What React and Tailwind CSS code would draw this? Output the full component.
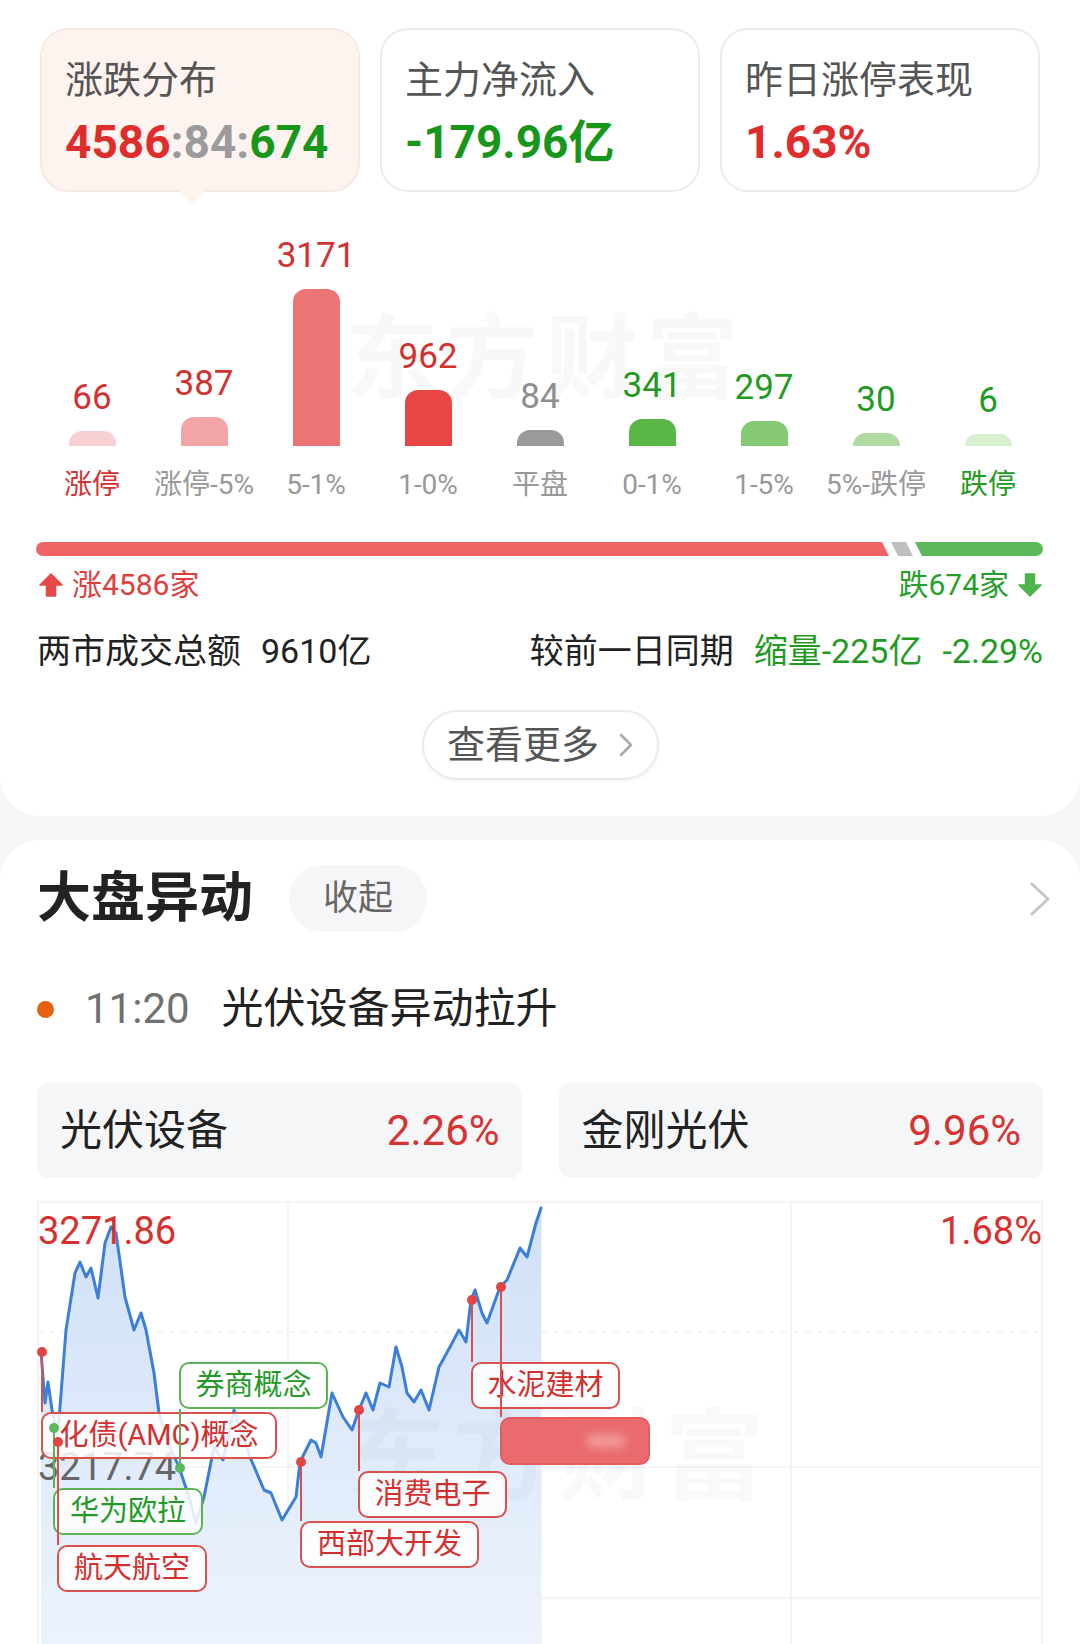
import clsx from 'clsx'

const FONT = "font-['Roboto','Noto_Sans_CJK_SC',sans-serif]"

// ── data ──────────────────────────────────────────────────────
const BARS = [
  { n: 66, h: 15, label: '涨停', bar: 'bg-[#f8cfd2]', num: 'text-[#d3312f]', lab: 'text-[#d3312f]' },
  { n: 387, h: 29, label: '涨停-5%', bar: 'bg-[#f2a4a6]', num: 'text-[#d3312f]', lab: 'text-[#999]' },
  { n: 3171, h: 157, label: '5-1%', bar: 'bg-[#ed7475]', num: 'text-[#d3312f]', lab: 'text-[#999]' },
  { n: 962, h: 56, label: '1-0%', bar: 'bg-[#e84545]', num: 'text-[#d3312f]', lab: 'text-[#999]' },
  { n: 84, h: 16, label: '平盘', bar: 'bg-[#9a9a9a]', num: 'text-[#8e8e8e]', lab: 'text-[#999]' },
  { n: 341, h: 27, label: '0-1%', bar: 'bg-[#5ab646]', num: 'text-[#1f9a22]', lab: 'text-[#999]' },
  { n: 297, h: 25, label: '1-5%', bar: 'bg-[#86c974]', num: 'text-[#1f9a22]', lab: 'text-[#999]' },
  { n: 30, h: 13, label: '5%-跌停', bar: 'bg-[#afdba2]', num: 'text-[#1f9a22]', lab: 'text-[#999]' },
  { n: 6, h: 12, label: '跌停', bar: 'bg-[#d6efcf]', num: 'text-[#1f9a22]', lab: 'text-[#1f9a22]' },
]

const LINE = [
  [4, 152], [8, 203], [11, 182], [15, 210], [20, 233], [22, 220], [29, 130], [38, 73], [43, 62],
  [49, 77], [54, 68], [61, 98], [68, 43], [74, 27], [79, 33], [88, 97], [97, 130], [104, 113],
  [109, 130], [117, 173], [122, 213], [131, 243], [142, 267], [152, 297], [159, 323], [167, 297],
  [177, 247], [186, 260], [197, 210], [213, 257], [227, 290], [234, 293], [245, 320], [259, 297],
  [263, 262], [274, 240], [279, 243], [284, 257], [295, 193], [306, 217], [315, 230], [322, 210],
  [329, 193], [336, 210], [343, 183], [352, 187], [359, 147], [365, 167], [370, 193], [377, 202],
  [384, 190], [392, 210], [402, 167], [413, 147], [422, 130], [429, 142], [434, 100], [438, 90],
  [445, 113], [450, 123], [463, 87], [470, 80], [483, 48], [490, 57], [499, 23], [504, 8],
]

// connector: x, from (dot y), to (box edge y), colour
const MARKS = [
  { x: 5, y: 152, to: 212, c: 'red' },
  { x: 17, y: 228, to: 288, c: 'green' },
  { x: 21, y: 242, to: 345, c: 'red' },
  { x: 143, y: 268, to: 209, c: 'green' },
  { x: 264, y: 262, to: 321, c: 'red' },
  { x: 322, y: 210, to: 271, c: 'red' },
  { x: 435, y: 100, to: 162, c: 'red' },
  { x: 464, y: 87, to: 217, c: 'red' },
]

const TAGS = [
  { text: '化债(AMC)概念', left: 4, top: 212, w: 236, c: 'red' },
  { text: '券商概念', left: 142, top: 162, w: 149, c: 'green' },
  { text: '华为欧拉', left: 16, top: 288, w: 150, c: 'green' },
  { text: '航天航空', left: 20, top: 345, w: 150, c: 'red' },
  { text: '西部大开发', left: 263, top: 321, w: 179, c: 'red' },
  { text: '消费电子', left: 321, top: 271, w: 149, c: 'red' },
  { text: '水泥建材', left: 434, top: 162, w: 149, c: 'red' },
]

const linePath = LINE.map(([x, y], i) => `${i ? 'L' : 'M'}${x} ${y}`).join(' ')
const fillPath = `M4 444 ${LINE.map(([x, y]) => `L${x} ${y}`).join(' ')} L504 444 Z`

// ── small drawings ────────────────────────────────────────────
function Arrow({ className }) {
  return (
    <svg width="26" height="26" viewBox="0 0 26 26" className={className}>
      <path d="M13 2 L24 13 H17.5 V24 H8.5 V13 H2 Z" fill="currentColor" stroke="currentColor" strokeWidth="1.5" strokeLinejoin="round" />
    </svg>
  )
}

function Chevron({ w, h, color, stroke, className }) {
  return (
    <svg width={w} height={h} viewBox={`0 0 ${w} ${h}`} className={className}>
      <polyline points={`2,2 ${w - 2},${h / 2} 2,${h - 2}`} fill="none" stroke={color} strokeWidth={stroke} strokeLinecap="round" strokeLinejoin="round" />
    </svg>
  )
}

// ── top summary ───────────────────────────────────────────────
function StatCard({ title, active, children }) {
  return (
    <div className={clsx('relative h-[164px] rounded-[28px] border-2 px-[23px] pt-[31px]', active ? 'border-[#f8e8e2] bg-[#fdf4f0]' : 'border-[#ececec] bg-white')}>
      <div className="text-[38px] leading-none text-[#555]">{title}</div>
      <div className="mt-[20px] text-[46px] font-bold leading-none">{children}</div>
      {active && <div className="absolute -bottom-[14px] left-[137px] h-[14px] w-[28px] bg-[#fdf4f0] [clip-path:polygon(0_0,100%_0,50%_100%)]" />}
    </div>
  )
}

function TopCard() {
  return (
    <section className="relative overflow-hidden rounded-b-[40px] bg-white pt-[28px] pb-[36px]">
      <div className="pointer-events-none absolute left-[346px] top-[314px] text-[92px] font-bold leading-none tracking-[8px] text-[#f8f8f8]">东方财富</div>

      <div className="relative grid grid-cols-3 gap-[20px] px-[40px]">
        <StatCard title="涨跌分布" active>
          <span className="text-[#e02c2c]">4586</span>
          <span className="text-[#9b9b9b]">:84:</span>
          <span className="text-[#17961c]">674</span>
        </StatCard>
        <StatCard title="主力净流入">
          <span className="text-[#17961c]">-179.96亿</span>
        </StatCard>
        <StatCard title="昨日涨停表现">
          <span className="text-[#e02c2c]">1.63%</span>
        </StatCard>
      </div>

      {/* distribution bars */}
      <div className="relative grid h-[254px] grid-cols-9 items-end px-[36px]">
        {BARS.map((b) => (
          <div key={b.label} className="flex flex-col items-center">
            <div className={clsx('mb-[16px] text-[35px] leading-none', b.num)}>{b.n}</div>
            <div className={clsx('w-[47px] rounded-t-[13px]', b.bar)} style={{ height: b.h }} />
          </div>
        ))}
      </div>
      <div className="relative mt-[25px] grid grid-cols-9 px-[36px]">
        {BARS.map((b) => (
          <div key={b.label} className={clsx('text-center text-[28px] leading-none whitespace-nowrap', b.lab)}>{b.label}</div>
        ))}
      </div>

      {/* ratio bar */}
      <div className="relative mt-[43px] flex h-[14px] px-[36px]">
        <div className="w-[853px] rounded-l-full bg-[#ef6565] [clip-path:polygon(0_0,calc(100%_-_7px)_0,100%_100%,0_100%)]" />
        <div className="ml-[2px] w-[22px] bg-[#bfbfbf] [clip-path:polygon(0_0,calc(100%_-_7px)_0,100%_100%,7px_100%)]" />
        <div className="ml-[2px] w-[128px] rounded-r-full bg-[#5cb85a] [clip-path:polygon(0_0,100%_0,100%_100%,7px_100%)]" />
      </div>

      <div className="relative mt-[14px] flex h-[30px] items-center justify-between pl-[38px] pr-[37px] text-[30px] leading-none">
        <div className="flex items-center">
          <Arrow className="text-[#e64848]" />
          <span className="ml-[8px] text-[#e03d3d]">涨4586家</span>
        </div>
        <div className="flex items-center">
          <span className="mr-[8px] text-[#25a02a]">跌674家</span>
          <Arrow className="rotate-180 text-[#4fb34c]" />
        </div>
      </div>

      <div className="relative mt-[34px] flex items-center justify-between pl-[37px] pr-[37px] text-[34px] leading-none text-[#222]">
        <div>
          两市成交总额<span className="ml-[20px]">9610亿</span>
        </div>
        <div>
          较前一日同期
          <span className="ml-[20px] text-[#1f9b24]">缩量-225亿</span>
          <span className="ml-[20px] text-[#1f9b24]">-2.29%</span>
        </div>
      </div>

      <div className="relative mt-[42px] flex justify-center">
        <div className="flex h-[70px] w-[237px] items-center justify-center rounded-full border-2 border-[#ebebeb] shadow-[0_2px_4px_rgba(0,0,0,0.04)]">
          <span className="text-[38px] leading-none text-[#555]">查看更多</span>
          <Chevron w={14} h={24} color="#aaaaaa" stroke={2.5} className="ml-[20px]" />
        </div>
      </div>
    </section>
  )
}

// ── market moves ──────────────────────────────────────────────
function Tag({ text, left, top, w, c }) {
  return (
    <div
      className={clsx(
        'absolute flex h-[47px] items-center justify-center whitespace-nowrap rounded-[10px] border-2 bg-white/85 text-[29px] leading-none',
        c === 'red' ? 'border-[#d9504c] text-[#d2302f]' : 'border-[#5cb356] text-[#239a27]',
      )}
      style={{ left, top, width: w }}
    >
      {text}
    </div>
  )
}

function Chart() {
  return (
    <div className="relative mt-[22px] h-[444px] overflow-hidden">
      <svg width="1006" height="444" className="absolute left-0 top-0">
        <defs>
          <linearGradient id="area" x1="0" y1="0" x2="0" y2="1">
            <stop offset="0" stopColor="#cfe0f7" />
            <stop offset="1" stopColor="#edf3fc" />
          </linearGradient>
        </defs>
        <g stroke="#f1f1f1" strokeWidth="1.5">
          <line x1="1" y1="2" x2="1" y2="444" />
          <line x1="251" y1="2" x2="251" y2="444" />
          <line x1="504" y1="2" x2="504" y2="444" />
          <line x1="754" y1="2" x2="754" y2="444" />
          <line x1="1005" y1="2" x2="1005" y2="444" />
          <line x1="0" y1="2" x2="1006" y2="2" />
          <line x1="0" y1="132" x2="1006" y2="132" strokeDasharray="6 6" />
          <line x1="0" y1="267" x2="1006" y2="267" />
          <line x1="0" y1="398" x2="1006" y2="398" />
        </g>
        <path d={fillPath} fill="url(#area)" />
        <path d={linePath} fill="none" stroke="#3b7fd6" strokeWidth="3" strokeLinejoin="round" strokeLinecap="round" />
      </svg>

      <div className="pointer-events-none absolute left-[309px] top-[208px] text-[100px] font-bold leading-none tracking-[6px] text-[#000]/[0.025]">东方财富</div>

      <div className="absolute left-[1px] top-[12px] text-[38px] leading-none text-[#d8302e]">3271.86</div>
      <div className="absolute right-[1px] top-[12px] text-[38px] leading-none text-[#d8302e]">1.68%</div>
      <div className="absolute left-[1px] top-[248px] text-[38px] leading-none text-[#666]">3217.74</div>

      {TAGS.map((t) => (
        <Tag key={t.text} {...t} />
      ))}
      <div className="absolute left-[463px] top-[217px] flex h-[48px] w-[150px] items-center justify-end rounded-[10px] border-2 border-[#e25c5e] bg-[#ea6b6d] pr-[22px]">
        <span className="h-[14px] w-[40px] rounded-full bg-white/30 blur-[4px]" />
      </div>

      <svg width="1006" height="444" className="absolute left-0 top-0">
        {MARKS.map((m) => (
          <g key={m.x} fill={m.c === 'red' ? '#e04545' : '#5cb85c'} stroke={m.c === 'red' ? '#d9504c' : '#5cb356'}>
            <line x1={m.x} y1={m.y} x2={m.x} y2={m.to} strokeWidth="2" />
            <circle cx={m.x} cy={m.y} r="5" stroke="none" />
          </g>
        ))}
      </svg>
    </div>
  )
}

function MarketCard() {
  return (
    <section className="mt-[24px] rounded-t-[40px] bg-white px-[37px] pt-[25px]">
      <div className="flex h-[67px] items-center">
        <h2 className="text-[54px] font-bold leading-none text-[#222]">大盘异动</h2>
        <div className="ml-[36px] flex h-[67px] w-[138px] items-center justify-center rounded-full bg-[#f6f6f8] text-[35px] leading-none text-[#666]">收起</div>
        <Chevron w={20} h={34} color="#c6c6c6" stroke={3} className="ml-auto mr-[-7px]" />
      </div>

      <div className="mt-[56px] flex h-[42px] items-center">
        <span className="h-[17px] w-[17px] rounded-full bg-[#e5600f]" />
        <span className="ml-[31px] text-[42px] leading-none text-[#707070]">11:20</span>
        <span className="ml-[32px] text-[42px] leading-none text-[#222]">光伏设备异动拉升</span>
      </div>

      <div className="mt-[53px] grid grid-cols-2 gap-[37px]">
        {[
          ['光伏设备', '2.26%'],
          ['金刚光伏', '9.96%'],
        ].map(([name, pct]) => (
          <div key={name} className="flex h-[95px] items-center justify-between rounded-[12px] bg-[#f5f6f8] pl-[23px] pr-[22px] text-[42px] leading-none">
            <span className="text-[#222]">{name}</span>
            <span className="text-[#d63333]">{pct}</span>
          </div>
        ))}
      </div>

      <Chart />
    </section>
  )
}

export default function App() {
  return (
    <div className={clsx('min-h-[1644px] w-[1080px] bg-[#f5f6f8] text-[#222]', FONT)}>
      <TopCard />
      <MarketCard />
    </div>
  )
}
